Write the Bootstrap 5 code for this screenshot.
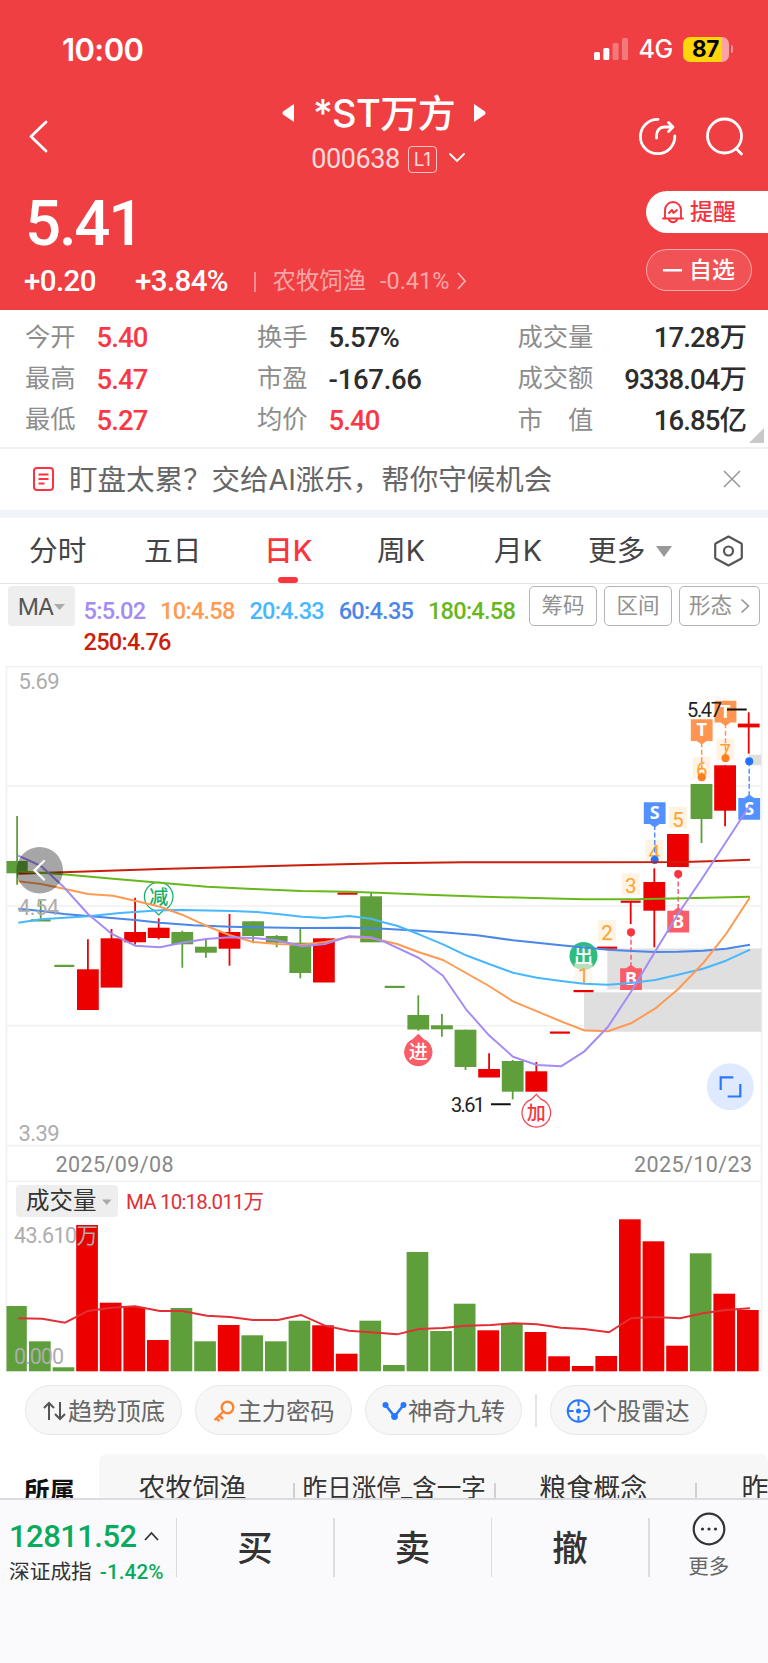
<!DOCTYPE html>
<html lang="zh-CN">
<head>
<meta charset="utf-8">
<meta name="viewport" content="width=device-width, initial-scale=1">
<title>*ST万方 000638</title>
<link href="https://cdn.jsdelivr.net/npm/bootstrap@5.3.0/dist/css/bootstrap.min.css" rel="stylesheet">
<style>
body{font-family:"Inter","Noto Sans CJK SC",sans-serif;background:#fff;width:768px;height:1663px;overflow:hidden;color:#333;line-height:1}
svg{display:block;flex:none}
.num{font-family:"Roboto","Noto Sans CJK SC",sans-serif}
.hd{background:#f03f42;height:309.5px;color:#fff}
.status{height:88px;padding:10px 35px 0 62px}
.status .clock{font-size:31px;font-weight:600;letter-spacing:-.6px}
.net{font-size:25px;font-weight:500;letter-spacing:-.6px;margin-left:11px}
.batt{width:46px;height:25px;border-radius:7px;margin-left:10px;font-size:22.5px;font-weight:700;color:#000;letter-spacing:-.3px;background:linear-gradient(90deg,#ffd60a 39px,#f9a3a5 39px)}
.nub{width:2.5px;height:8px;border-radius:0 3px 3px 0;background:#f79a9c;margin-left:2px}
.titles{height:95px}
.ttl{height:48px;font-size:38px;font-weight:500;gap:19px;padding-top:2px}
.ttl b{font-weight:500;letter-spacing:-.6px}
.code{height:46px;color:rgba(255,255,255,.82);padding-left:8px}
.code .num{font-size:27px;letter-spacing:-.45px}
.l1{width:29px;height:27px;border:1.5px solid rgba(255,255,255,.7);border-radius:4px;font-size:19px;margin-left:8px;letter-spacing:-.5px}
.side{width:142px}
.price{height:80px;font-size:63.5px;font-weight:500;letter-spacing:-2.2px;padding-left:25px;padding-top:2px}
.chg{height:37px;font-size:29.5px;font-weight:500;padding-left:24px;letter-spacing:-.6px;padding-top:1px}
.chg i{width:1.5px;height:20px;background:rgba(255,255,255,.4)}
.sector{color:rgba(255,255,255,.55);font-size:23.4px;font-weight:400;letter-spacing:0}
.alertbtn,.favbtn{height:42px;font-size:23px;font-weight:500}
.alertbtn{width:122px;background:#fff;color:#f5333f;border-radius:21px 0 0 21px;margin-top:7.5px;padding-left:15px;gap:5px;padding-top:1px}
.favbtn{width:106px;border:1.5px solid rgba(255,255,255,.5);background:rgba(255,255,255,.1);border-radius:21px;margin-top:16.5px;padding-left:16px;gap:7px}
.stats{height:139.5px;padding:6.500px 22px 0 25px;border-bottom:2px solid #f0f0f0;display:grid;grid-template-columns:232px 260.5px 1fr;grid-auto-rows:41.3px;align-items:center;font-size:25.3px;color:#8d8d8d;position:relative}
.stats .num{font-size:27.5px;font-weight:500;color:#2d2d2d;letter-spacing:-.9px;position:relative;top:1.5px}
.stats .pe{letter-spacing:-.3px}
.stats .up{color:#fa3845}
.stats span+.num{margin-left:21px}
.corner{position:absolute;right:4px;bottom:4px;border-left:15px solid transparent;border-bottom:15px solid #c9c9c9}
.notice{height:61px;padding:2px 26px 0 33px;font-size:28.5px;color:#666;border:0}
.notice svg{margin-top:-3px}
.notice .msg{margin-left:15px;white-space:nowrap}
.strip{height:8px;background:#f1f4f9}
.periods{height:66px;border-bottom:1.5px solid #e4e4e4;font-size:28.7px;color:#444;padding-bottom:0}
.periods>div{height:65px;display:flex;align-items:center;white-space:nowrap;padding-top:2px}
.periods .on{color:#fb3440;font-weight:500;position:relative}
.periods .on::after{content:"";position:absolute;left:14px;bottom:0;width:20px;height:6px;border-radius:3px;background:#fb3440}
.ma{height:81px;padding:2px 8px 0;position:relative}
.mabtn{width:67px;height:40px;background:#eee;border-radius:4px;font-size:23.5px;color:#555;gap:1px;letter-spacing:-1px;padding-top:1px}
.mavals{width:440px;margin-left:8.5px;font-size:23.6px;font-weight:500;line-height:31px;padding-top:10px;column-gap:14.7px;letter-spacing:-.75px;white-space:nowrap}
.toolb{height:40px;border:1.5px solid #b3b3b3;border-radius:5px;font-size:21.5px;color:#929292;width:68px}
.pills{height:82px;padding:13px 0 0 25px;gap:13px}
.pillx{width:157px;height:50px;border-radius:25px;background:#f7f7f7;border:1.5px solid #e8e8e8;font-size:24.3px;color:#666;gap:1px;white-space:nowrap;padding-top:2px}
.vline{width:1.5px;background:#e3e3e3;flex:none}
.belong{height:44px;overflow:hidden;white-space:nowrap;align-items:flex-start}
.belong .lbl{width:99px;padding:24px 0 0 24px;font-size:25.5px;font-weight:700;color:#111;flex:none}
.belong .tags{height:60px;width:669px;background:#f7f7f7;border-radius:8px 8px 0 0;color:#333;padding-top:21px;font-size:27px;overflow:hidden}
.belong .tags>span{flex:none}
.belong .tags .vline{height:30px;background:#d0d0d0;margin-top:8px}
.foot{height:166px;background:#fafafc;border-top:2px solid #dcdce0}
.foot .idx{width:175.5px;padding:18px 0 0 9px;white-space:nowrap}
.foot .vline{height:59px;margin-top:18px;background:#dcdcde}
.foot .act{width:156px;font-size:35.5px;font-weight:500;padding-top:31px;text-align:center}
.gn{color:#0aaa5c}
</style>
</head>
<body>
<header class="hd">
  <div class="status d-flex align-items-center">
    <span class="clock">10:00</span>
    <svg class="ms-auto" width="34" height="22" viewBox="0 0 34 22" fill="#fff"><rect x="0" y="14" width="6" height="8" rx="1.5"/><rect x="9.3" y="10" width="6" height="12" rx="1.5"/><rect x="18.6" y="5" width="6" height="17" rx="1.5" opacity=".3"/><rect x="28" y="0" width="6" height="22" rx="1.5" opacity=".3"/></svg>
    <span class="net">4G</span>
    <span class="batt d-flex align-items-center justify-content-center">87</span><span class="nub"></span>
  </div>
  <div class="titles d-flex">
    <div class="side"><svg width="60" height="95" viewBox="0 88 60 95" fill="none" stroke="#fff" stroke-width="2.8" stroke-linecap="round" stroke-linejoin="round"><path d="M46 122 31 136.500 46 151"/></svg></div>
    <div class="flex-fill">
      <div class="ttl d-flex align-items-center justify-content-center">
        <svg width="12" height="18" viewBox="0 0 12 18" fill="#fff"><path d="M12 0v18L1 10.500Q0 9 1 7.500z"/></svg>
        <b>*ST万方</b>
        <svg width="12" height="18" viewBox="0 0 12 18" fill="#fff"><path d="M0 0v18L11 10.500Q12 9 11 7.500z"/></svg>
      </div>
      <div class="code d-flex align-items-center justify-content-center">
        <span class="num">000638</span>
        <span class="l1 d-flex align-items-center justify-content-center">L1</span>
        <svg width="28" height="12" viewBox="0 0 28 12" fill="none" stroke="#fff" stroke-width="1.8" stroke-linecap="round"><path d="M13 1l7 7 7-7"/></svg>
      </div>
    </div>
    <div class="side"><svg width="142" height="95" viewBox="626 88 142 95" fill="none" stroke="#fff" stroke-width="2.8" stroke-linecap="round"><path d="M658 119.300A17.200 17.200 0 1 0 674.800 136"/><path d="M656.500 138v-2.500q.5-8 8-8.500h7.500M668.500 122.500l4.500 4.500-4.500 4.500" stroke-linejoin="round"/><circle cx="724.500" cy="136" r="17"/><path d="M736 148.500l5.500 5.500"/></svg></div>
  </div>
  <div class="d-flex justify-content-between">
    <div class="num">
      <div class="price d-flex align-items-center">5.41</div>
      <div class="chg d-flex align-items-center"><span style="width:111px">+0.20</span><span style="width:119px">+3.84%</span><i></i>
        <span class="sector d-flex align-items-center" style="margin-left:17px">农牧饲渔<span style="margin-left:14px">-0.41%</span><svg width="18" height="20" viewBox="0 0 18 20" fill="none" stroke="#f9b2b3" stroke-width="1.8"><path d="M9 1l7 8-7 8"/></svg></span></div>
    </div>
    <div class="d-flex flex-column">
      <div class="alertbtn d-flex align-items-center">
        <svg width="24" height="24" viewBox="0 0 24 24" fill="none" stroke="#f5333f" stroke-width="1.9" stroke-linecap="round" stroke-linejoin="round"><path d="M4 18V10a8 8 0 0 1 16 0v8M2 18.500h20M8 20q4 4.500 8 0M8 13l3-3 1.500 3L16 10"/></svg>提醒</div>
      <div class="favbtn d-flex align-items-center"><svg width="19" height="3"><rect width="19" height="2.5" fill="#fff"/></svg>自选</div>
    </div>
  </div>
</header>

<section class="stats">
  <div><span>今开</span><span class="num up">5.40</span></div><div><span>换手</span><span class="num">5.57%</span></div><div class="d-flex justify-content-between align-items-center">成交量<b class="num">17.28万</b></div>
  <div><span>最高</span><span class="num up">5.47</span></div><div><span>市盈</span><span class="num pe">-167.66</span></div><div class="d-flex justify-content-between align-items-center">成交额<b class="num">9338.04万</b></div>
  <div><span>最低</span><span class="num up">5.27</span></div><div><span>均价</span><span class="num up">5.40</span></div><div class="d-flex justify-content-between align-items-center">市　值<b class="num">16.85亿</b></div>
  <div class="corner"></div>
</section>

<section class="notice d-flex align-items-center">
  <svg width="21" height="24" viewBox="0 0 21 24" fill="none" stroke="#fb3440" stroke-width="2"><rect x="1" y="1" width="19" height="22" rx="3"/><path d="M5.500 7.500h10M5.500 12h10M5.500 16.500h6"/></svg>
  <span class="msg">盯盘太累？交给AI涨乐，帮你守候机会</span>
  <svg class="ms-auto" width="20" height="20" viewBox="0 0 20 20" stroke="#999" stroke-width="1.6"><path d="M2 2l16 16M18 2L2 18"/></svg>
</section>
<div class="strip"></div>

<nav class="periods d-flex">
  <div style="width:115px;padding-left:29px">分时</div><div style="width:149px;padding-left:29px">五日</div><div class="on" style="width:113px">日K</div><div style="width:117px">周K</div><div style="width:94px">月K</div>
  <div style="width:126px">更多<svg style="margin-left:11px" width="16" height="11"><path d="M0 0h16L8 11z" fill="#999"/></svg></div>
  <div style="padding-top:0"><svg width="29" height="32" viewBox="0 0 29 32" fill="none" stroke="#555" stroke-width="2.2" stroke-linejoin="round"><path d="M14.500 1.500 27 8.200q.8.500.8 1.500v12.600q0 1-.8 1.500L14.500 30.500 2 23.800q-.8-.5-.8-1.500V9.700q0-1 .8-1.500z"/><circle cx="14.500" cy="16" r="4.500"/></svg></div>
</nav>

<section class="ma d-flex">
  <div class="mabtn d-flex align-items-center justify-content-center">MA<svg width="11" height="6"><path d="M0 0h11L5.500 6z" fill="#aaa"/></svg></div>
  <div class="mavals num d-flex flex-wrap align-content-start">
    <span style="color:#a58bf5">5:5.02</span><span style="color:#ff9a52">10:4.58</span><span style="color:#47b8ff">20:4.33</span><span style="color:#4a87e6">60:4.35</span><span style="color:#68b81c">180:4.58</span><span style="color:#c91f0c">250:4.76</span>
  </div>
  <div class="d-flex ms-auto" style="gap:7px">
    <div class="toolb d-flex align-items-center justify-content-center">筹码</div><div class="toolb d-flex align-items-center justify-content-center">区间</div>
    <div class="toolb d-flex align-items-center justify-content-center" style="width:81px;gap:8px">形态<svg width="10" height="16" viewBox="0 0 10 16" fill="none" stroke="#929292" stroke-width="1.6"><path d="M1.500 1.500 8.500 8l-7 6.500"/></svg></div>
  </div>
</section>

<svg id="chart" class="num" width="768" height="707" viewBox="0 665 768 707">
  <g stroke="#f1f1f1" stroke-width="1.6" fill="none"><path d="M6.500 1372V666.700H761.500V1372M6 786H762M6 906H762M6 1025.700H762M6 1145.700H762M6 1181.300H762M678 867.500H762"/></g>
  <g fill="#dfdfdf"><path d="M607.300 948.500H761.500V989.500H607.300zM584 992.300H761.500V1031.700H584zM749 754.700H761.500V765.300H749z"/></g>
  <g id="candles"></g>
  <g id="marks"></g>
  <g id="lines" fill="none" stroke-width="2" stroke-linejoin="round"></g>
  <g font-size="22" fill="#adadad">
    <text x="18.500" y="688.500" textLength="41">5.69</text><text x="18" y="914.500" textLength="41">4.54</text><text x="18.500" y="1140.500" textLength="41">3.39</text>
  </g>
  <g font-size="21.500" fill="#888"><text x="55.500" y="1172" textLength="118">2025/09/08</text><text x="634" y="1172" textLength="118">2025/10/23</text></g>
  <g font-size="20" fill="#222"><text x="687" y="717" textLength="35">5.47</text><text x="451" y="1111.800" textLength="34">3.61</text></g>
  <path d="M727 709.500h19.700M491 1104.300h19.700" stroke="#111" stroke-width="2"/>
  <circle cx="39.700" cy="870.300" r="23.300" fill="#000" fill-opacity=".35"/><path d="M44 861 34.500 870.300 44 879.500" fill="none" stroke="#fff" stroke-width="2.4" stroke-linecap="round"/>
  <circle cx="730.300" cy="1086.700" r="23.500" fill="#dfe9ff"/><path d="M720.700 1090V1077.300H733.300M740.300 1084V1096.500H727.700" fill="none" stroke="#2878ff" stroke-width="2.2"/>
  <rect x="16" y="1185" width="102" height="32" rx="4" fill="#eee"/><path d="M102 1199.500h9.500l-4.700 5.500z" fill="#aaa"/>
  <text x="26" y="1209" font-size="23.500" fill="#333">成交量</text>
  <text x="126" y="1209" font-size="20.500" fill="#e03036" textLength="138">MA 10:18.011万</text>
  <g id="vol"></g>
  <g font-size="21.500" fill="#adadad"><text x="14" y="1243.300" textLength="84">43.610万</text><text x="14" y="1364.300" textLength="50">0.000</text></g>
</svg>

<section class="pills d-flex">
  <div class="pillx d-flex align-items-center justify-content-center"><svg width="25" height="22" viewBox="0 0 25 22" fill="none" stroke="#555" stroke-width="2"><path d="M7 20V3M2 8l5-5 5 5M18 2v17M13 14l5 5 5-5"/></svg>趋势顶底</div>
  <div class="pillx d-flex align-items-center justify-content-center"><svg width="24" height="22" viewBox="0 0 24 22" fill="none" stroke="#ff8432" stroke-width="2.4"><circle cx="15.500" cy="7.500" r="5.800"/><path d="M11.500 11.500 2.500 20M7 15.500l4 3.500M4 18l3.500 3"/></svg>主力密码</div>
  <div class="pillx d-flex align-items-center justify-content-center"><svg width="25" height="20" viewBox="0 0 25 20" fill="#2878ff"><path d="M3.500 4 12.500 15.500 21.500 4" fill="none" stroke="#2878ff" stroke-width="2.6"/><circle cx="3.500" cy="4" r="3"/><circle cx="12.500" cy="15.500" r="3.400"/><circle cx="21.500" cy="4" r="3"/></svg>神奇九转</div>
  <div class="vline" style="height:33px;margin-top:9px"></div>
  <div class="pillx d-flex align-items-center justify-content-center"><svg width="25" height="24" viewBox="0 0 25 24" fill="none" stroke="#2878ff" stroke-width="2"><circle cx="12.500" cy="12" r="10.800"/><path d="M12.500 1v6M12.500 17v6M1.500 12h6M17.500 12h6"/><circle cx="12.500" cy="12" r="1.500" fill="#2878ff"/></svg>个股雷达</div>
</section>

<section class="belong d-flex">
  <div class="lbl">所属</div>
  <div class="tags d-flex">
    <span class="text-center" style="width:194px;padding-right:7px">农牧饲渔</span><span class="vline"></span>
    <span class="text-center" style="width:199.500px;font-size:24.600px;padding-top:1px">昨日涨停_含一字</span><span class="vline"></span>
    <span class="text-center" style="width:199.500px;padding-right:4px">粮食概念</span><span class="vline"></span>
    <span style="padding-left:45px">昨日</span>
  </div>
</section>

<footer class="foot d-flex">
  <div class="idx">
    <div class="d-flex align-items-center gn num" style="font-size:31px;font-weight:500;height:36px;letter-spacing:-.55px">12811.52<svg style="margin-left:7px" width="15" height="10" viewBox="0 0 15 10" fill="none" stroke="#333" stroke-width="1.8"><path d="M1 9l6.500-7L14 9"/></svg></div>
    <div class="d-flex align-items-center" style="font-size:20.700px;height:34px;margin-top:1px">深证成指<span class="gn num" style="margin-left:8px;font-weight:500;letter-spacing:.1px">-1.42%</span></div>
  </div>
  <div class="vline"></div><div class="act">买</div><div class="vline"></div><div class="act">卖</div><div class="vline"></div><div class="act">撤</div><div class="vline"></div>
  <div class="flex-fill d-flex flex-column align-items-center" style="padding-top:12px;font-size:20.500px;color:#666">
    <svg width="34" height="34" viewBox="0 0 34 34" fill="none" stroke="#333" stroke-width="2.2"><circle cx="17" cy="17" r="15.300"/><g fill="#333" stroke="none"><circle cx="10.500" cy="17" r="1.600"/><circle cx="17" cy="17" r="1.600"/><circle cx="23.500" cy="17" r="1.600"/></g></svg>
    <span style="margin-top:11px">更多</span>
  </div>
</footer>

<script>
const R='#ec0000',G='#5e9f3b',cx=i=>17.1+23.6*i;
// colour, high, body top, body bottom, low
const K=[[G,816,861,873.3,884.7],[G,900.7,919.3,921.5,921],[G,0,964.8,967,0],[R,939.3,969.3,1010,1010],[R,929,938.3,987.6,987],[R,897.7,932,942.3,944.5],[R,918.3,927.7,938,939.3],[G,930.7,932,944.3,967.7],[G,939.3,946.7,952.7,957.7],[R,914,932,948.7,965.7],[G,921.3,921.3,936,943.3],[G,935,936,942.7,947.3],[G,927.3,942.7,973,978.3],[R,938.3,938.3,982.5,982],[R,0,892.5,894.7,0],[G,892.7,896.3,942.3,942],[G,0,985.8,988,0],[G,995.3,1015,1029.5,1030.7],[G,1014,1025.3,1029.3,1036.7],[G,1029.7,1029.7,1067,1070],[R,1053.3,1069,1077.5,1077],[G,1060,1061,1091.7,1099.3],[R,1062,1071.3,1091.7,1091],[R,0,1031.5,1033.7,0],[R,0,990,992.2,0],[R,0,946.6,948.8,0],[R,902,900.6,902.8,924],[R,868.3,882,910.7,947.3],[R,834,834,867,867],[G,784,784,819,843],[R,765.3,765.3,810.7,826.3],[R,712.3,723.6,727.4,753.7]];
let s='';
K.forEach(([c,h,a,b,l],i)=>{
  const w=b-a<3?20:21.8,x=cx(i);
  if(h)s+=`<path d="M${x} ${h}V${l}" stroke="${c}" stroke-width="1.8"/>`;
  s+=`<rect x="${i?x-w/2:6.5}" y="${a}" width="${i?w:21.2}" height="${b-a}" fill="${c}"/>`;
});
candles.innerHTML=s;

const L={
'#c91f0c':'18.3,873.7 63,872.3 160,869 300,865.3 384,863.2 464,862.3 584,862.3 684,862 717,861 750,859.7',
'#68b81c':'18.3,871.3 63,874.3 113,878.7 160,882.7 207,886.7 253,889 302,891 349,891.7 384,893 434,895 484,896.7 534,898 584,899.3 634,899.3 684,898.3 750,896.7',
'#4a87e6':'18.3,908.7 41,911 64,914 88,916 135,920 160,922.7 193,925.3 230,926.7 253,927.3 302,928 349,927.7 384,928.7 419,930.7 443,932.3 477,935.3 513,940.3 561,945.3 608,949.7 637,951.3 655,952 678,951.7 703,950.7 726,948.7 750,944.7',
'#47b8ff':'18.3,922.7 41,919.3 88,916.3 120,913 160,910.3 182,910 233,911 257,912 280,914.3 302,916.7 325,918 349,916 371,918.7 384,922.5 397,925.7 419,934.3 443,944.3 466,955.3 489,964 513,972.7 537,977.7 561,981 584,983.7 608,984.7 631,983 655,980 678,974.7 703,968.7 726,960.7 750,949.7',
'#ff9a52':'18.3,881.3 41,884 64,888.7 88,894 113,895.7 135,900.7 160,906.7 182,914.7 206,925.7 230,935.3 253,942 277,944 302,944.7 325,942 349,937 371,938 384,941 397,944 419,952.3 443,960 466,973 489,986 513,1001.3 561,1021.3 584,1030.3 608,1031.3 631,1023.3 655,1008.7 678,989.3 703,963.3 726,934 750,897.3',
'#a58bf5':'18.3,855.7 41,866 64,887.3 88,914 111,933.3 135,945.7 160,947.3 182,942.7 206,939 230,937.3 253,938 277,940.3 302,946.3 325,944 349,936.3 371,937.3 384,941.7 419,958 443,975.7 466,1009.3 489,1035.3 513,1056.7 537,1065 561,1066.3 584,1051.7 608,1026.7 631,991.7 655,951.7 678,914 701,880.3 749,806.7'};
document.getElementById('lines').innerHTML=Object.entries(L).map(([c,p])=>`<polyline points="${p}" stroke="${c}"/>`).join('');

let m='';
[[1,583.5,963],[2,607,920],[3,630.7,873.3],[4,654.3,840],[5,678,806.7],[6,701.7,756.7],[7,725.3,738.5]].forEach(([n,x,y])=>{
  if(n==1)m+=`<circle cx="583.500" cy="956" r="14" fill="#2fbd7f"/><text x="583.500" y="963" font-size="19" font-weight="500" fill="#fff" text-anchor="middle">出</text>`;
  m+=`<rect x="${x-9}" y="${y}" width="18" height="21.500" fill="#fff3e4" ${n==1?'opacity=".65"':''}/><text x="${x}" y="${y+20}" font-size="20.500" fill="#ffa22e" text-anchor="middle">${n}</text>`;
});
// trade flags: letter, x, flag top, dot y, pointer direction, flag colour, dot colour
[['T',701.7,719.3,777.3,1,'#ff9550','#ff7d1f'],['T',725.5,700.7,758.3,1,'#ff9550','#ff7d1f'],['S',654.7,802.3,860,1,'#5291ff','#2272ff'],['S',749.2,798,761.3,-1,'#5291ff','#2272ff'],['B',631,968.3,932.3,-1,'#f95d68','#f93340'],['B',678.2,910.7,874,-1,'#f95d68','#f93340']].forEach(([t,x,y,d,k,f,g])=>{
  const e=k>0?y+21.7:y;
  m+=`<path d="M${x} ${d}V${e+k*2}" stroke="${f}" stroke-width="1.5" stroke-dasharray="5 2.5"/><circle cx="${x}" cy="${d}" r="4" fill="${g}"/><path d="M${x-10.9} ${y}h21.800v21.700h-21.800zM${x-5} ${e}l5 ${k*3.5} 5 ${-k*3.5}z" fill="${f}"/><text x="${x}" y="${y+17}" font-family="Noto Sans" font-weight="700" font-size="18" fill="#fff" text-anchor="middle">${t}</text>`;
});
// round advice pins
[['减',158.7,896.7,1,'#fff','#0fae69','#0fae69'],['进',418.3,1052,-1,'#f95d68','#f95d68','#fff'],['加',536.3,1112.7,-1,'#fff','#f9404c','#f93340']].forEach(([t,x,y,k,f,st,c])=>{
  const r=t=='进'?13.5:14.3;
  m+=`<path d="M${x-5} ${y+k*(r-1)}A${r} ${r} 0 1 ${k>0?1:0} ${x+5} ${y+k*(r-1)}L${x} ${y+k*(r+4)}z" fill="${f}" stroke="${st}" stroke-width="1.2"/><text x="${x}" y="${y+7}" font-size="19" font-weight="500" fill="${c}" text-anchor="middle">${t}</text>`;
});
marks.innerHTML=m;

const V=[1306,1341.3,1367.3,1225,1302.7,1307,1340,1308,1341.3,1325,1335.3,1341.3,1320.7,1325.3,1353.7,1320.7,1365,1252,1331,1303.7,1330.3,1324,1332,1356.3,1366,1356,1219.3,1241.3,1345.7,1253.3,1293.7,1310];
vol.innerHTML=V.map((y,i)=>`<rect x="${i?cx(i)-11.7:6.5}" y="${y}" width="${i?21.7:20.3}" height="${1371.3-y}" fill="${K[i][0]}"/>`).join('')+
'<polyline fill="none" stroke="#e03036" stroke-width="1.9" points="18.3,1318.3 42.3,1318.7 65,1322.7 88,1311 111,1307.7 135,1306.3 160,1311 182,1311 207,1315.7 230,1317 253,1320 278,1320 301,1315 325,1325.7 349,1330.7 384,1333.3 397,1334.3 419,1329 443,1328 466,1325.7 491,1325 513,1323.3 537,1324.3 561,1327.7 584,1329 609,1332.3 631,1318.3 655,1317 680,1318.3 703,1313.3 726,1310 750,1308.3"/>';
</script>
<script src="https://cdn.jsdelivr.net/npm/bootstrap@5.3.0/dist/js/bootstrap.bundle.min.js"></script>
</body>
</html>
